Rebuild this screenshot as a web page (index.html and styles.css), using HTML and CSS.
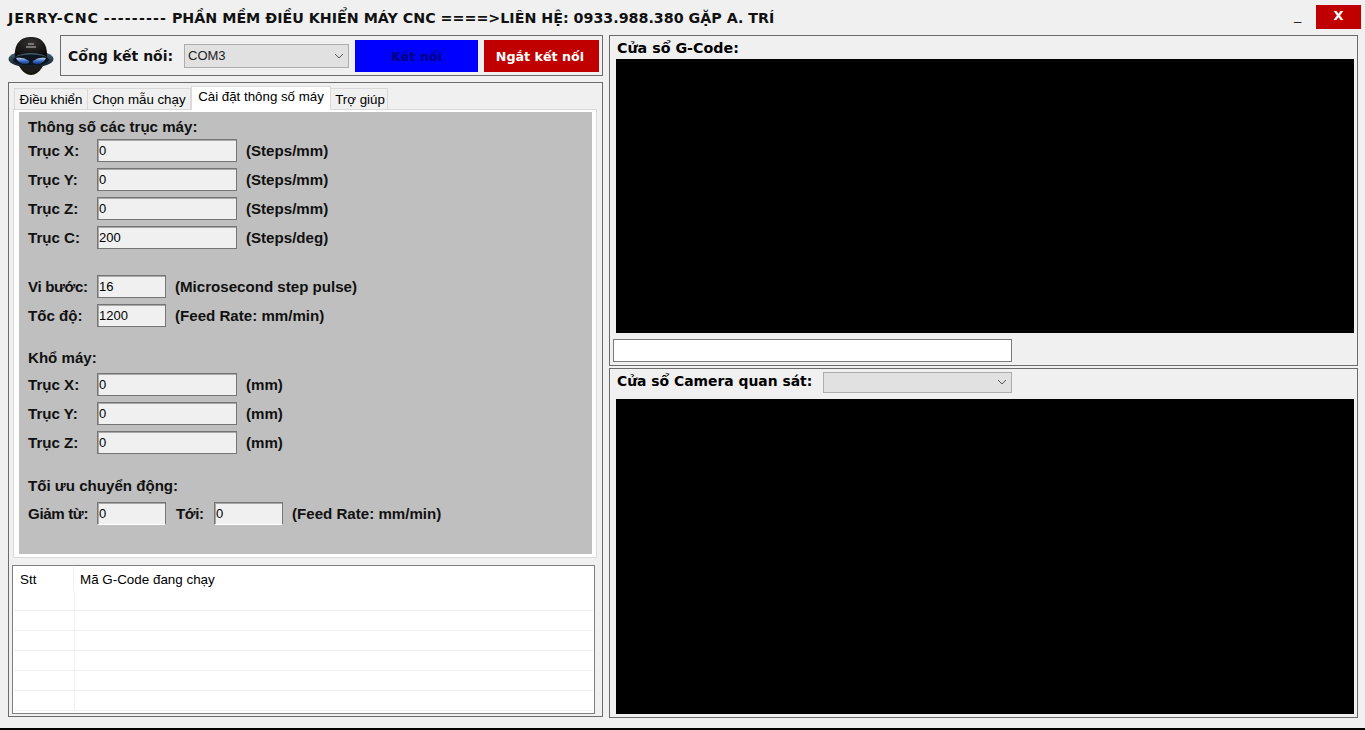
FILE: index.html
```html
<!DOCTYPE html>
<html lang="vi">
<head>
<meta charset="utf-8">
<title>JERRY-CNC</title>
<link rel="stylesheet" href="styles.css">
</head>
<body>
<div class="app">
  <header class="titlebar">
    <div class="title"><span class="title-brand">JERRY-CNC</span> <span class="title-dashes">---------</span> PHẦN MỀM ĐIỀU KHIỂN MÁY CNC ====&gt;LIÊN HỆ: 0933.988.380 GẶP A. TRÍ</div>
    <div class="min-btn">_</div>
    <div class="close-btn">X</div>
  </header>
  <main class="columns">
    <section class="left">
      <div class="conn-row">
        <svg class="logo" width="46" height="40" viewBox="0 0 46 40">
          <defs>
            <radialGradient id="dome" cx="50%" cy="30%" r="70%"><stop offset="0" stop-color="#363230"/><stop offset="1" stop-color="#0c0b0b"/></radialGradient>
            <linearGradient id="rim" x1="0" y1="0" x2="0" y2="1"><stop offset="0" stop-color="#48677a"/><stop offset="1" stop-color="#121d26"/></linearGradient>
            <linearGradient id="visor" x1="0" y1="0" x2="0" y2="1"><stop offset="0" stop-color="#c4d4ec"/><stop offset=".55" stop-color="#3a6ccc"/><stop offset="1" stop-color="#183478"/></linearGradient>
            <filter id="soft" x="-5%" y="-5%" width="110%" height="110%"><feGaussianBlur stdDeviation="0.6"/></filter>
          </defs>
          <g filter="url(#soft)">
            <path d="M9 23C9 27 14 39 23 39s14-12 14-16z" fill="#131211"/>
            <ellipse cx="23" cy="23" rx="22.5" ry="8.5" fill="url(#rim)"/>
            <ellipse cx="23" cy="24" rx="18" ry="5.5" fill="#0f161d"/>
            <path d="M7 21C6 6 14 1 23 1s17 5 16 20c-4-3-10-4-16-4s-12 1-16 4z" fill="url(#dome)"/>
            <path d="M8 22c5-1 9 0 13 3 1 2-1 3-4 3-4 0-7-2-9-6zM38 22c-5-1-9 0-13 3-1 2 1 3 4 3 4 0 7-2 9-6z" fill="url(#visor)"/>
            <path d="M20 8h6M18 11h10" stroke="#8f8f8f" stroke-width="1.3"/>
            <path d="M14 30c3 3 6 4 9 4s6-1 9-4" fill="none" stroke="#1d1c1b" stroke-width="4"/>
          </g>
        </svg>
        <div class="conn-box">
          <span class="conn-label">Cổng kết nối:</span>
          <div class="combo combo-port">
            <span>COM3</span>
            <svg class="chev" width="10" height="6" viewBox="0 0 10 6"><path d="M1 1l4 4 4-4" fill="none" stroke="#555"/></svg>
          </div>
          <div class="btn btn-connect">Kết nối</div>
          <div class="btn btn-disconnect">Ngắt kết nối</div>
        </div>
      </div>
      <div class="panel">
        <nav class="tabs">
          <div class="tab tab-1">Điều khiển</div>
          <div class="tab tab-2">Chọn mẫu chạy</div>
          <div class="tab tab-active">Cài đặt thông số máy</div>
          <div class="tab tab-4">Trợ giúp</div>
        </nav>
        <div class="tab-page">
          <div class="settings">
            <div class="heading">Thông số các trục máy:</div>
            <div class="row"><span class="lbl">Trục X:</span><div class="field wide">0</div><span class="unit">(Steps/mm)</span></div>
            <div class="row"><span class="lbl">Trục Y:</span><div class="field wide">0</div><span class="unit">(Steps/mm)</span></div>
            <div class="row"><span class="lbl">Trục Z:</span><div class="field wide">0</div><span class="unit">(Steps/mm)</span></div>
            <div class="row"><span class="lbl">Trục C:</span><div class="field wide">200</div><span class="unit">(Steps/deg)</span></div>
            <div class="row section"><span class="lbl tight">Vi bước:</span><div class="field narrow">16</div><span class="unit">(Microsecond step pulse)</span></div>
            <div class="row"><span class="lbl">Tốc độ:</span><div class="field narrow">1200</div><span class="unit">(Feed Rate: mm/min)</span></div>
            <div class="heading section-h">Khổ máy:</div>
            <div class="row"><span class="lbl">Trục X:</span><div class="field wide">0</div><span class="unit">(mm)</span></div>
            <div class="row"><span class="lbl">Trục Y:</span><div class="field wide">0</div><span class="unit">(mm)</span></div>
            <div class="row"><span class="lbl">Trục Z:</span><div class="field wide">0</div><span class="unit">(mm)</span></div>
            <div class="heading section-h section-h-last">Tối ưu chuyển động:</div>
            <div class="row">
              <span class="lbl tight">Giảm từ:</span><div class="field narrow flat">0</div>
              <span class="lbl lbl-to tight">Tới:</span><div class="field narrow flat">0</div>
              <span class="unit">(Feed Rate: mm/min)</span>
            </div>
          </div>
        </div>
        <div class="list">
          <div class="list-head"><div class="col-stt">Stt</div><div class="col-code">Mã G-Code đang chạy</div></div>
          <div class="list-row"><i></i></div>
          <div class="list-row"><i></i></div>
          <div class="list-row"><i></i></div>
          <div class="list-row"><i></i></div>
          <div class="list-row"><i></i></div>
          <div class="list-row"><i></i></div>
        </div>
      </div>
    </section>
    <section class="right">
      <div class="box box-gcode">
        <div class="box-title gcode-title">Cửa sổ G-Code:</div>
        <div class="screen screen-gcode"></div>
        <div class="gcode-input"></div>
      </div>
      <div class="box box-camera">
        <div class="cam-head">
          <span class="box-title cam-title">Cửa sổ Camera quan sát:</span>
          <div class="combo combo-cam">
            <svg class="chev" width="10" height="6" viewBox="0 0 10 6"><path d="M1 1l4 4 4-4" fill="none" stroke="#555"/></svg>
          </div>
        </div>
        <div class="screen screen-cam"></div>
      </div>
    </section>
  </main>
  <div class="bottom-line"></div>
</div>
</body>
</html>
```
FILE: styles.css
```css
* { box-sizing: border-box; }
html, body { margin: 0; padding: 0; }
body { background: #f0f0f0; color: #000; font-family: "Liberation Sans", Arial, sans-serif; font-size: 13px; overflow: hidden; }
.app { width: 1365px; height: 730px; display: flex; flex-direction: column; }

.titlebar { height: 35px; display: flex; align-items: flex-start; padding: 5px 4px 0 8px; flex: none; }
.title { font: bold 14.25px/26px "DejaVu Sans", Verdana, sans-serif; flex: 1; white-space: nowrap; color: #111; }
.title-brand { letter-spacing: 0.85px; }
.title-dashes { letter-spacing: 1.1px; }
.min-btn { font: 13px/24px "Liberation Sans", sans-serif; width: 22px; margin-top: -1px; }
.close-btn { width: 45px; height: 24px; background: #c00000; color: #fff; font: bold 13px/22px "DejaVu Sans", sans-serif; text-align: center; }

.columns { flex: 1; display: flex; gap: 6px; padding-left: 8px; min-height: 0; }
.left { width: 595px; flex: none; display: flex; flex-direction: column; gap: 6px; }
.right { width: 749px; flex: none; display: flex; flex-direction: column; gap: 3px; }

.conn-row { display: flex; height: 41px; align-items: center; gap: 6px; }
.logo { flex: none; }
.conn-box { flex: 1; height: 41px; border: 1px solid #6b6b6b; display: flex; align-items: center; padding-left: 7px; padding-right: 3px; }
.conn-label { font: bold 14px "DejaVu Sans", Verdana, sans-serif; width: 116px; flex: none; white-space: nowrap; color: #111; }
.combo { background: #e1e1e1; border: 1px solid #adadad; height: 24px; display: flex; align-items: center; justify-content: space-between; padding: 0 4px 0 3px; font-size: 13px; color: #222; }
.combo-port { width: 165px; flex: none; }
.combo-cam { width: 189px; height: 21px; justify-content: flex-end; }
.btn { height: 32px; display: flex; align-items: center; justify-content: center; font: bold 12.7px "DejaVu Sans", Verdana, sans-serif; padding-top: 1px; }
.btn-connect { width: 123px; background: #0000ff; color: #00007c; margin-left: 6px; }
.btn-disconnect { width: 115px; background: #c00000; color: #fff; margin-left: 6px; padding-right: 3px; }

.panel { height: 635px; border: 1px solid #6b6b6b; padding: 3px 4px 0 3px; }
.tabs { display: flex; align-items: flex-end; height: 23px; padding-left: 2px; position: relative; z-index: 1; }
.tab { height: 21px; border: 1px solid #d9d9d9; border-bottom: 0; border-left-width: 0; font-size: 13.3px; line-height: 21px; text-align: center; background: #f0f0f0; white-space: nowrap; }
.tab-1 { width: 74px; border-left-width: 1px; }
.tab-2 { width: 103px; }
.tab-active { width: 140px; height: 24px; background: #fff; margin-bottom: -1px; border-left-width: 1px; line-height: 20px; }
.tab-4 { width: 57px; padding-left: 2px; }
.tab-page { width: 584px; height: 449px; margin-left: 1px; border: 1px solid #d9d9d9; background: #fff; padding: 2px 4px 3px 5px; }
.settings { height: 100%; background: #bfbfbf; padding: 6px 0 0 9px; }
.heading { font-weight: bold; font-size: 15.1px; line-height: 18px; margin-bottom: 3px; color: #111; }
.section-h { margin-top: 22px; margin-bottom: 6px; }
.section-h-last { margin-top: 23px; margin-bottom: 7px; }
.row { display: flex; align-items: center; height: 23px; margin-bottom: 6px; font-weight: bold; font-size: 15.1px; color: #111; }
.section { margin-top: 26px; }
.lbl { width: 69px; flex: none; white-space: nowrap; }
.tight { letter-spacing: -0.35px; }
.lbl-to { width: 38px; margin-left: 10px; }
.field { height: 23px; border: 1px solid #757575; background: #f0f0f0; font-weight: normal; font-size: 13px; line-height: 22px; padding-left: 1px; flex: none; color: #000; box-shadow: inset 1px 1px 0 #a8a8a8; }
.flat { border-bottom-color: #fff; }
.wide { width: 140px; }
.narrow { width: 69px; }
.unit { margin-left: 9px; white-space: nowrap; }

.list { width: 583px; height: 149px; margin-top: 7px; border: 1px solid #7f7f7f; background: #fff; padding: 1px 1px 0; overflow: hidden; font-size: 13.4px; }
.list-head { display: flex; height: 24px; }
.col-stt { width: 60px; padding-left: 6px; border-right: 1px solid #f0f0f0; line-height: 26px; }
.col-code { padding-left: 6px; line-height: 26px; }
.list-row { height: 20px; border-bottom: 1px solid #f0f0f0; }
.list-row i { display: block; width: 61px; height: 100%; border-right: 1px solid #f0f0f0; }

.box { border: 1px solid #6b6b6b; padding: 0 3px; }
.box-gcode { height: 331px; }
.box-camera { height: 350px; margin-top: -1px; }
.box-title { display: block; font: bold 14px/21px "DejaVu Sans", Verdana, sans-serif; padding-left: 4px; color: #000; white-space: nowrap; }
.gcode-title { font-size: 14.25px; padding-top: 2px; }
.cam-title { font-size: 13.9px; padding-bottom: 2px; }
.screen { background: #000; width: 738px; margin-left: 3px; }
.screen-gcode { height: 274px; }
.screen-cam { height: 315px; margin-top: 6px; }
.gcode-input { width: 399px; height: 23px; margin-top: 6px; background: #fff; border: 1px solid #7a7a7a; }
.cam-head { display: flex; align-items: center; height: 24px; padding-top: 2px; }
.cam-head .combo { margin-left: 11px; }

.bottom-line { height: 2px; background: #000; flex: none; }
```
